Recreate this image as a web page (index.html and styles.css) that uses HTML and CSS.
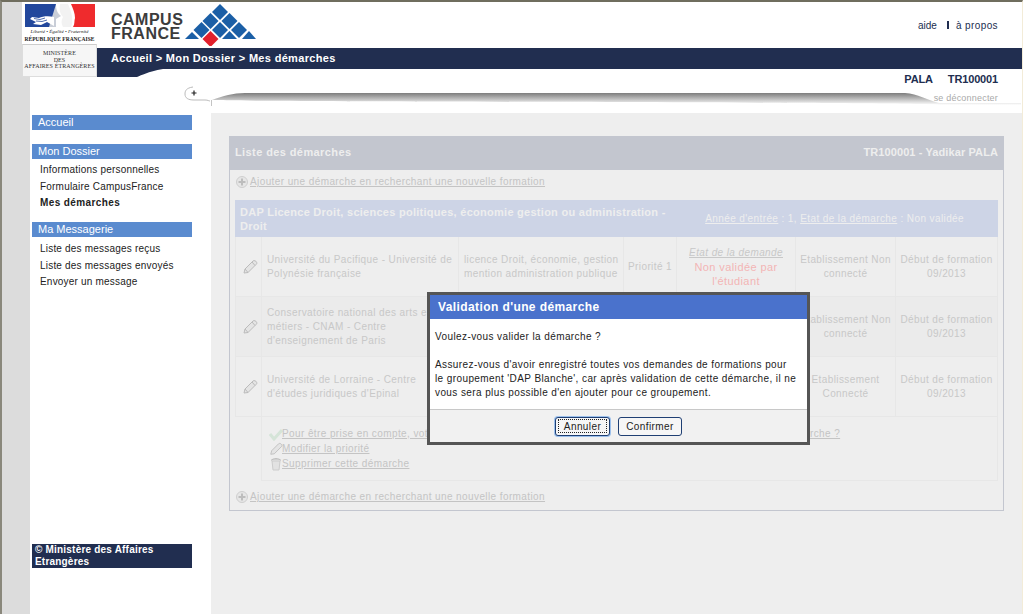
FILE: index.html
```html
<!DOCTYPE html>
<html lang="fr">
<head>
  <meta charset="UTF-8">
  <title>Campus France - Mes démarches</title>
  <link rel="stylesheet" href="styles.css">
</head>
<body>
<div class="page">
  <!-- Logo ministere, depasse sur la bande grise -->
  <div class="logo-rf">
    <div class="rf-top">
      <svg class="rf-flag" width="70" height="23" viewBox="0 0 70 23">
        <rect width="70" height="23" fill="#fff"/>
        <rect width="31" height="23" fill="#22479c"/>
        <path d="M46 0H70V23H48C50 20 49 17 50 14C50 9 48 5 46 0Z" fill="#ef2b2d"/>
        <path d="M31 0C31 5 32 9 36 12L31 15V23H24L31 0Z" fill="#c9ced8"/>
        <path d="M35 0C34 5 35 10 38 13C36 16 36 20 38 23H46C48 19 47 15 47 12C46 8 45 4 43 0Z" fill="#f2f2f2"/>
        <path d="M29 13C24 12 18 12 14 14L7 13L5 15L11 18L8 20L16 21L22 18L29 22Z" fill="#fff"/>
        <path d="M9 14.500L15 15.500L20 14M11 17L17 17.500L22 16" stroke="#22479c" stroke-width="0.800" fill="none"/>
      </svg>
      <div class="rf-motto">Liberté • Égalité • Fraternité</div>
      <div class="rf-name">RÉPUBLIQUE FRANÇAISE</div>
    </div>
    <div class="rf-bottom">MINISTÈRE<br>DES<br>AFFAIRES ÉTRANGÈRES</div>
  </div>

  <div class="frame">
    <div class="header">
      <div class="brand">
        <div class="brand-name">CAMPUS<br>FRANCE</div>
        <svg class="brand-mark" width="74" height="44" viewBox="0 0 74 44">
          <g fill="#1b5fa6">
            <path d="M36 2L44 10L36 18L28 10Z"/>
            <path d="M26.500 11L34.500 19L26.500 27L18.500 19Z"/>
            <path d="M45.500 11L53.500 19L45.500 27L37.500 19Z"/>
            <path d="M17.500 20L25.500 28L17.500 36L9.500 28Z"/>
            <path d="M36 20L44 28L36 36L28 28Z"/>
            <path d="M55 20L63 28L55 36L47 28Z"/>
            <path d="M8 30L15 37H1Z"/>
            <path d="M45.500 29L53 37H38Z"/>
            <path d="M65 29L72 37H58Z"/>
          </g>
          <path d="M26.500 29L34.500 37L26.500 45L18.500 37Z" fill="#e2202c"/>
        </svg>
      </div>
      <div class="top-links">
        <a href="#">aide</a>
        <span class="sep"></span>
        <a href="#">à propos</a>
      </div>
    </div>

    <div class="crumb">
      Accueil &gt; Mon Dossier &gt; Mes démarches
      <svg class="crumb-tail" width="70" height="8" viewBox="0 0 70 8"><path d="M0 0H66C50 3 45 6 40 8H0Z" fill="#212e50"/></svg>
    </div>

    <div class="userbar">
      <div class="user-names"><span>PALA</span><span>TR100001</span></div>
      <div class="swoosh-row">
        <svg width="838" height="20" viewBox="0 0 838 20">
          <defs>
            <linearGradient id="sw" x1="0" y1="0" x2="0" y2="1">
              <stop offset="0" stop-color="#7d7d7d"/>
              <stop offset="1" stop-color="#fff"/>
            </linearGradient>
          </defs>
          <path d="M29 14C40 10 50 7 62 7H722C735 8 744 14 756 17H838V19H756C740 16 60 16 29 14Z" fill="url(#sw)"/>
          <path d="M10 1C3 2 2 5 2 8C2 12 5 14 11 14H22C25 14 26 15 27 15" fill="none" stroke="#bbb" stroke-width="1"/>
          <path d="M8.500 7H13.500M11 4.500V9.500" stroke="#222" stroke-width="1.200"/>
          <path d="M28.500 14.500V20" stroke="#888" stroke-width="1" stroke-dasharray="1 1"/>
        </svg>
        <a class="logout" href="#">se déconnecter</a>
      </div>
    </div>

    <div class="content">
      <div class="sidebar">
        <div class="side-title">Accueil</div>
        <div class="side-title">Mon Dossier</div>
        <ul class="side-list">
          <li>Informations personnelles</li>
          <li>Formulaire CampusFrance</li>
          <li class="current">Mes démarches</li>
        </ul>
        <div class="side-title">Ma Messagerie</div>
        <ul class="side-list side-list-msg">
          <li>Liste des messages reçus</li>
          <li>Liste des messages envoyés</li>
          <li>Envoyer un message</li>
        </ul>
        <div class="copyright">© Ministère des Affaires Etrangères</div>
      </div>

      <div class="main">
        <div class="panel">
          <div class="panel-head">
            <span>Liste des démarches</span>
            <span class="panel-user">TR100001 - Yadikar PALA</span>
          </div>
          <div class="add-line">
            <svg class="add-icon" width="14" height="14" viewBox="0 0 14 14"><circle cx="7" cy="7" r="5.500" fill="#e6e6e6" stroke="#cfcfcf"/><path d="M7 3.500V10.500M3.500 7H10.500" stroke="#bdbdbd" stroke-width="2"/></svg>
            <a href="#">Ajouter une démarche en recherchant une nouvelle formation</a>
          </div>

          <table class="steps">
            <colgroup>
              <col class="c-edit"><col class="c-school"><col class="c-course"><col class="c-prio"><col class="c-state"><col class="c-link"><col class="c-date">
            </colgroup>
            <tr class="group-row">
              <td colspan="4" class="group-title">DAP Licence Droit, sciences politiques, économie gestion ou administration - Droit</td>
              <td colspan="3" class="group-info"><u>Année d'entrée</u> : 1, <u>Etat de la démarche</u> : Non validée</td>
            </tr>
            <tr>
              <td class="edit"><svg class="pencil" width="16" height="16" viewBox="0 0 16 16"><path d="M2 14L3 10L11 2C12 1 14 2 14.500 3C15 4 15 4.500 14 5.500L6 13.500Z" fill="#e4e4e4" stroke="#bbb"/><path d="M3 10L6 13.500M10 3L13 6.500" stroke="#bbb"/></svg></td>
              <td>Université du Pacifique - Université de Polynésie française</td>
              <td>licence Droit, économie, gestion mention administration publique</td>
              <td class="center">Priorité 1</td>
              <td class="center"><u class="state-label">Etat de la demande</u><div class="state-bad">Non validée par l'étudiant</div></td>
              <td class="center">Etablissement Non connecté</td>
              <td class="center">Début de formation 09/2013</td>
            </tr>
            <tr class="alt">
              <td class="edit"><svg class="pencil" width="16" height="16" viewBox="0 0 16 16"><path d="M2 14L3 10L11 2C12 1 14 2 14.500 3C15 4 15 4.500 14 5.500L6 13.500Z" fill="#e4e4e4" stroke="#bbb"/><path d="M3 10L6 13.500M10 3L13 6.500" stroke="#bbb"/></svg></td>
              <td>Conservatoire national des arts et métiers - CNAM - Centre d'enseignement de Paris</td>
              <td></td>
              <td class="center"></td>
              <td class="center"></td>
              <td class="center">Etablissement Non connecté</td>
              <td class="center">Début de formation 09/2013</td>
            </tr>
            <tr>
              <td class="edit"><svg class="pencil" width="16" height="16" viewBox="0 0 16 16"><path d="M2 14L3 10L11 2C12 1 14 2 14.500 3C15 4 15 4.500 14 5.500L6 13.500Z" fill="#e4e4e4" stroke="#bbb"/><path d="M3 10L6 13.500M10 3L13 6.500" stroke="#bbb"/></svg></td>
              <td>Université de Lorraine - Centre d'études juridiques d'Epinal</td>
              <td></td>
              <td class="center"></td>
              <td class="center"></td>
              <td class="center">Etablissement Connecté</td>
              <td class="center">Début de formation 09/2013</td>
            </tr>
            <tr class="actions-row">
              <td class="no-border"></td>
              <td colspan="6" class="actions">
                <div class="action">
                  <svg width="14" height="14" viewBox="0 0 14 14"><path d="M1 7L5 12L13 3" fill="none" stroke="#d5e4d8" stroke-width="3"/></svg>
                  <a href="#">Pour être prise en compte, votre démarche doit être validée par vous seul. Souhaitez-vous valider cette démarche ?</a>
                </div>
                <div class="action">
                  <svg width="14" height="14" viewBox="0 0 16 16"><path d="M2 14L3 10L11 2C12 1 14 2 14.500 3C15 4 15 4.500 14 5.500L6 13.500Z" fill="#e4e4e4" stroke="#bbb"/></svg>
                  <a href="#">Modifier la priorité</a>
                </div>
                <div class="action">
                  <svg width="14" height="14" viewBox="0 0 14 14"><path d="M3 4H11L10 13H4Z" fill="#e2e2e2" stroke="#ccc"/><path d="M2 3.500C4 1 10 1 12 3.500" fill="#d5d5d5" stroke="#bbb"/></svg>
                  <a href="#">Supprimer cette démarche</a>
                </div>
              </td>
            </tr>
          </table>

          <div class="add-line add-bottom">
            <svg class="add-icon" width="14" height="14" viewBox="0 0 14 14"><circle cx="7" cy="7" r="5.500" fill="#e6e6e6" stroke="#cfcfcf"/><path d="M7 3.500V10.500M3.500 7H10.500" stroke="#bdbdbd" stroke-width="2"/></svg>
            <a href="#">Ajouter une démarche en recherchant une nouvelle formation</a>
          </div>
        </div>
      </div>
    </div>
  </div>

  <!-- Popup de validation -->
  <div class="modal">
    <div class="modal-title">Validation d'une démarche</div>
    <div class="modal-body">
      <p>Voulez-vous valider la démarche ?</p>
      <p>Assurez-vous d'avoir enregistré toutes vos demandes de formations pour<br>le groupement 'DAP Blanche', car après validation de cette démarche, il ne<br>vous sera plus possible d'en ajouter pour ce groupement.</p>
    </div>
    <div class="modal-foot">
      <button class="btn btn-focus"><span>Annuler</span></button>
      <button class="btn">Confirmer</button>
    </div>
  </div>
</div>
</body>
</html>
```

FILE: styles.css
```css
* {
  box-sizing: border-box;
}
html, body {
  margin: 0;
  height: 100%;
  overflow: hidden;
}
body {
  font-family: "Liberation Sans", Arial, sans-serif;
  font-size: 10px;
  letter-spacing: 0.4px;
  color: #222;
}
a {
  color: inherit;
}
.page {
  position: relative;
  display: flex;
  height: 614px;
  border-top: 2px solid #6f6d5e;
  border-left: 2px solid #8a887c;
  border-right: 1px solid #f3ecd8;
  padding-left: 28px;
  background: #dcdcdc;
}
.frame {
  flex: 1;
  display: flex;
  flex-direction: column;
  background: #fff;
  min-width: 0;
}

/* logo */
.logo-rf {
  position: absolute;
  left: 20px;
  top: 0;
  width: 75px;
  height: 75px;
  z-index: 2;
  background: #fff;
  font-family: "Liberation Serif", serif;
  letter-spacing: 0;
  text-align: center;
  white-space: nowrap;
  color: #222;
}
.rf-top {
  height: 42px;
  padding-top: 2px;
}
.rf-flag {
  display: block;
  margin: 0 auto;
}
.rf-motto {
  font-size: 5px;
  font-style: italic;
  line-height: 6px;
  margin-top: 2px;
}
.rf-name {
  font-size: 5.500px;
  font-weight: bold;
  line-height: 9px;
}
.rf-bottom {
  height: 33px;
  padding-top: 5px;
  background: #f6f6f6;
  border: 1px solid #ddd;
  border-top-color: #ccc;
  font-size: 6px;
  line-height: 6.500px;
  letter-spacing: 0.100px;
  color: #333;
}

/* header */
.header {
  height: 46px;
  display: flex;
  justify-content: space-between;
  padding-left: 81px;
}
.brand {
  display: flex;
}
.brand-name {
  width: 73px;
  font-size: 16px;
  font-weight: bold;
  line-height: 14px;
  letter-spacing: 0.500px;
  color: #3c3c3c;
  padding-top: 11px;
}
.top-links {
  display: flex;
  align-items: center;
  gap: 7px;
  padding: 0 24px 0 0;
  height: 46px;
  color: #212e50;
}
.top-links a {
  text-decoration: none;
}
.top-links a:first-child {
  margin-right: 3px;
  letter-spacing: 0;
}
.sep {
  width: 2px;
  height: 8px;
  background: #212e50;
}
.crumb {
  position: relative;
  height: 21px;
  margin-left: 67px;
  padding-left: 14px;
  background: #212e50;
  color: #fff;
  font-size: 11px;
  font-weight: bold;
  line-height: 21px;
  letter-spacing: 0.320px;
}
.crumb-tail {
  position: absolute;
  left: 0;
  top: 21px;
}
.userbar {
  height: 44px;
}
.user-names {
  display: flex;
  justify-content: flex-end;
  gap: 15px;
  height: 17px;
  padding: 4px 24px 0 0;
  font-size: 11px;
  font-weight: bold;
  line-height: 13px;
  letter-spacing: -0.150px;
  color: #212e50;
}
.swoosh-row {
  position: relative;
  padding-left: 153px;
}
.swoosh-row svg {
  display: block;
}
.logout {
  position: absolute;
  right: 24px;
  top: 6px;
  font-size: 9px;
  line-height: 13px;
  letter-spacing: 0.200px;
  color: #aaa;
  text-decoration: none;
}

/* colonnes */
.content {
  flex: 1;
  display: flex;
  min-height: 0;
}
.sidebar {
  position: relative;
  width: 181px;
  padding: 2px 19px 0 2px;
}
.side-title {
  height: 15px;
  margin-bottom: 14px;
  padding-left: 6px;
  background: #5a8bcf;
  color: #fff;
  font-size: 11px;
  line-height: 15px;
  letter-spacing: 0;
}
.side-list {
  list-style: none;
  margin: -11px 0 10.500px;
  padding: 0 0 0 8px;
}
.side-list-msg {
  margin-top: -10px;
}
.side-list li {
  height: 16.500px;
  line-height: 16.500px;
  letter-spacing: 0.200px;
  color: #222;
}
.side-list .current {
  font-weight: bold;
  letter-spacing: 0.400px;
}
.copyright {
  position: absolute;
  left: 2px;
  top: 431px;
  width: 160px;
  height: 24px;
  padding-left: 3px;
  background: #212e50;
  color: #fff;
  font-weight: bold;
  line-height: 12px;
  letter-spacing: 0.200px;
}
.main {
  flex: 1;
  background: #eee;
  padding: 23px 18px 0;
}
.panel {
  height: 375px;
  border: 1px solid #c3c6cf;
  border-top: 0;
  color: #c8c8c8;
  font-size: 10px;
}
.panel-head {
  height: 34px;
  margin: 0 -1px;
  display: flex;
  justify-content: space-between;
  align-items: center;
  padding: 0 6px 2px;
  background: #c3c6cf;
  color: #eee;
  font-size: 11px;
  font-weight: bold;
}
.panel-user {
  letter-spacing: 0.100px;
}
.add-line {
  display: flex;
  align-items: center;
  height: 23px;
  padding-left: 5px;
}
.add-line a {
  margin-left: 1px;
  color: #c4c4c4;
}
.add-bottom {
  margin-top: 4px;
}
.steps {
  width: 762px;
  margin: 7px 0 0 5px;
  border-collapse: collapse;
  table-layout: fixed;
}
.steps td {
  border: 1px solid #e7e7e7;
  padding: 0 3px 0 5px;
  line-height: 14px;
  height: 60px;
  vertical-align: middle;
}
.c-edit { width: 26px; }
.c-school { width: 197px; }
.c-course { width: 165px; }
.c-prio { width: 53px; }
.c-state { width: 119px; }
.c-link { width: 100px; }
.c-date { width: 102px; }
.steps .group-row td {
  height: 36px;
  background: #cdd4e6;
  color: #eee;
  border-color: #cdd4e6;
}
.steps .group-title {
  padding-left: 4px;
  font-size: 11px;
  font-weight: bold;
  letter-spacing: 0.270px;
}
.steps .group-info {
  text-align: right;
  padding-right: 33px;
  padding-top: 0;
  white-space: nowrap;
}
.alt td {
  background: #ebebeb;
}
.steps .center {
  padding: 0 2px;
  text-align: center;
}
.edit {
  text-align: center;
}
.pencil {
  display: block;
  margin: 0 auto;
}
.state-label {
  font-style: italic;
}
.state-bad {
  color: #f3b5b5;
  font-size: 11px;
}
.steps .no-border {
  border: 0;
}
.steps .actions {
  height: 64px;
  padding: 9px 0 0 7px;
  vertical-align: top;
}
.action {
  display: flex;
  align-items: center;
  height: 15px;
  white-space: nowrap;
}
.action svg {
  margin-right: -1px;
}
.action a {
  color: #c4c4c4;
}

/* popup */
.modal {
  position: absolute;
  left: 425px;
  top: 290px;
  width: 383px;
  height: 153px;
  z-index: 5;
  display: flex;
  flex-direction: column;
  border: 3px solid #555;
  background: #fff;
  color: #222;
}
.modal-title {
  height: 24px;
  padding-left: 8px;
  background: #4a72cc;
  color: #fff;
  font-size: 12px;
  font-weight: bold;
  line-height: 24px;
}
.modal-body {
  flex: 1;
  min-height: 0;
  padding: 11px 5px 0;
  line-height: 14px;
  letter-spacing: 0.400px;
  white-space: nowrap;
}
.modal-body p {
  margin: 0 0 14px;
}
.modal-body p:last-child {
  margin-bottom: 0;
}
.modal-foot {
  flex: none;
  height: 33px;
  display: flex;
  justify-content: center;
  align-items: center;
  gap: 8px;
  border-top: 1px solid #c8c8c8;
  background: #f1f1f1;
}
.btn {
  width: 64px;
  height: 19px;
  padding: 0;
  border: 1px solid #1f3f73;
  border-radius: 3px;
  background: #f6f6f6;
  color: #222;
  font: inherit;
  letter-spacing: 0.400px;
}
.btn-focus {
  width: 55px;
  padding: 0 2px;
  box-shadow: 0 0 0 1px #9cc0ec;
}
.btn-focus span {
  display: block;
  padding-top: 1px;
  border: 1px dotted #222;
}
```
